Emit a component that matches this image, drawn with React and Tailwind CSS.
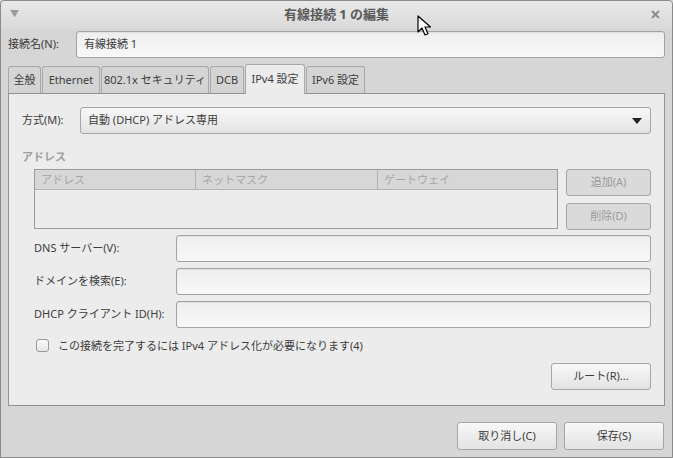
import React from 'react'

const FONT = { fontFamily: '"Noto Sans", "Noto Sans CJK JP", sans-serif' }

function TextBox({ className = '', children }) {
  return (
    <div
      className={`flex h-[27px] items-center rounded-[3px] border border-[#a3a3a3] bg-gradient-to-b from-[#eeeeee] to-[#f8f8f8] px-[7px] text-[11px] text-[#3c3c3c] shadow-[inset_0_1px_1px_rgba(0,0,0,0.06)] ${className}`}
    >
      {children}
    </div>
  )
}

function Button({ className = '', disabled, children }) {
  return (
    <button
      className={`flex h-[27px] items-center justify-center whitespace-nowrap rounded-[3px] border border-[#a6a6a6] text-[11px] ${
        disabled
          ? 'bg-[#dadada] text-[#9a9a9a]'
          : 'bg-gradient-to-b from-[#f8f8f8] to-[#e3e3e3] text-[#3c3c3c]'
      } ${className}`}
    >
      {children}
    </button>
  )
}

const TABS = [
  { label: '全般', w: 'w-[33px]' },
  { label: 'Ethernet', w: 'w-[58px]' },
  { label: '802.1x セキュリティ', w: 'w-[108px]' },
  { label: 'DCB', w: 'w-[34px]' },
  { label: 'IPv4 設定', w: 'w-[60px]', active: true },
  { label: 'IPv6 設定', w: 'w-[59px]' },
]

export default function App() {
  return (
    <div style={FONT} className="relative h-[458px] w-[673px] overflow-hidden bg-[#d6d6d6] text-[11px]">
      <div className="flex h-full flex-col rounded-t-[4px] border border-[#8a8a8a] bg-[#d6d6d6]">
        {/* title bar */}
        <div className="relative flex h-[28px] shrink-0 items-center justify-center rounded-t-[4px] bg-gradient-to-b from-[#e9e9e9] to-[#d9d9d9]">
          <span className="absolute left-[9px] top-[8px] text-[9px] leading-none text-[#9a9a9a]">▼</span>
          <span className="text-[13px] font-bold text-[#5a5a5a]">有線接続 1 の編集</span>
          <svg className="absolute right-[12px] top-[9px]" width="9" height="9" viewBox="0 0 9 9">
            <path d="M1 1l7 7M8 1L1 8" stroke="#8e8e8e" strokeWidth="2" />
          </svg>
        </div>

        {/* connection name */}
        <div className="mt-[2px] flex items-center px-[7px]">
          <span className="w-[68px] whitespace-nowrap text-[#3c3c3c]">接続名(N):</span>
          <TextBox className="h-[26px] flex-1">有線接続 1</TextBox>
        </div>

        {/* tabs */}
        <div className="mt-[6px] flex items-end gap-[1px] px-[7px]">
          {TABS.map((t) => (
            <div
              key={t.label}
              className={`flex items-center justify-center whitespace-nowrap rounded-t-[3px] border border-b-0 border-[#a8a8a8] text-[#3c3c3c] ${t.w} ${
                t.active ? 'relative z-10 -mb-px h-[30px] bg-[#ececec]' : 'h-[27px] bg-[#d4d4d4]'
              }`}
            >
              {t.label}
            </div>
          ))}
        </div>

        {/* panel */}
        <div className="mx-[7px] flex h-[313px] flex-col border border-[#929292] bg-[#ececec] px-[13px] pt-[13px] text-[#3c3c3c]">
          <div className="flex items-center">
            <span className="w-[58px] whitespace-nowrap">方式(M):</span>
            <div className="relative flex h-[27px] flex-1 items-center rounded-[3px] border border-[#a6a6a6] bg-gradient-to-b from-[#f8f8f8] to-[#e3e3e3] px-[7px]">
              自動 (DHCP) アドレス専用
              <svg className="absolute right-[8px] top-[10px]" width="10" height="6" viewBox="0 0 10 6">
                <path d="M0 0h10L5 6z" fill="#222" />
              </svg>
            </div>
          </div>

          <div className="mt-[15px] font-bold text-[#a0a0a0]">アドレス</div>

          <div className="mt-[3px] flex gap-[8px] pl-[12px]">
            <div className="h-[60px] flex-1 border border-[#9a9a9a] bg-[#ececec]">
              <div className="flex h-[20px] border-b border-[#b4b4b4] bg-[#d7d7d7] text-[#a6a6a6]">
                <div className="w-[161px] border-r border-[#b0b0b0] pl-[6px] leading-[20px]">アドレス</div>
                <div className="w-[182px] border-r border-[#b0b0b0] pl-[6px] leading-[20px]">ネットマスク</div>
                <div className="flex-1 pl-[6px] leading-[20px]">ゲートウェイ</div>
              </div>
            </div>
            <div className="flex w-[85px] flex-col gap-[7px]">
              <Button disabled className="h-[26px]">追加(A)</Button>
              <Button disabled className="h-[26px]">削除(D)</Button>
            </div>
          </div>

          <div className="mt-[5px] flex flex-col gap-[6px] pl-[12px]">
            {['DNS サーバー(V):', 'ドメインを検索(E):', 'DHCP クライアント ID(H):'].map((l) => (
              <div key={l} className="flex items-center">
                <span className="w-[142px] whitespace-nowrap">{l}</span>
                <TextBox className="flex-1" />
              </div>
            ))}
          </div>

          <div className="mt-[10px] flex items-center pl-[14px]">
            <span className="h-[13px] w-[13px] rounded-[3px] border border-[#9a9a9a] bg-gradient-to-b from-[#fafafa] to-[#e6e6e6]" />
            <span className="ml-[9px] whitespace-nowrap">この接続を完了するには IPv4 アドレス化が必要になります(4)</span>
          </div>

          <div className="mt-[9px] flex justify-end">
            <Button className="w-[100px]">ルート(R)...</Button>
          </div>
        </div>

        {/* bottom buttons */}
        <div className="mt-[16px] flex justify-end gap-[7px] px-[8px]">
          <Button className="h-[28px] w-[100px]">取り消し(C)</Button>
          <Button className="h-[28px] w-[100px]">保存(S)</Button>
        </div>
      </div>

      {/* mouse pointer */}
      <svg className="absolute left-[417px] top-[15px]" width="14" height="21" viewBox="0 0 14 21">
        <path d="M1 1v16l4-4 3 7 3-1.3-3-6.7h5.5z" fill="#fff" stroke="#000" strokeWidth="1.2" strokeLinejoin="round" />
      </svg>
    </div>
  )
}
